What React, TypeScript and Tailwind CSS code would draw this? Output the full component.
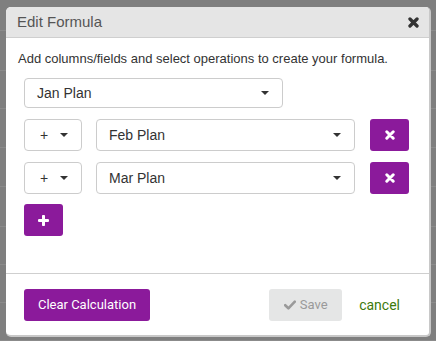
import React from "react";

function Caret() {
  return (
    <svg width="8" height="4" viewBox="0 0 8 4" className="flex-shrink-0">
      <path d="M0 0 H8 L4 4 Z" fill="#333" />
    </svg>
  );
}

function Times({ size = 10, color = "#fff", weight = 2.6 }: { size?: number; color?: string; weight?: number }) {
  return (
    <svg width={size} height={size} viewBox="0 0 10 10">
      <path d="M1.8 1.8 L8.2 8.2 M8.2 1.8 L1.8 8.2" stroke={color} strokeWidth={weight} strokeLinecap="round" />
    </svg>
  );
}

function Select({ label, className }: { label: string; className: string }) {
  return (
    <div
      className={
        "flex items-center justify-between border border-[#ccc] rounded-[4px] bg-white pl-[12px] pr-[13px] text-[14px] text-[#333] " +
        className
      }
    >
      <span>{label}</span>
      <Caret />
    </div>
  );
}

function FormulaRow({ label }: { label: string }) {
  return (
    <div className="flex items-center">
      <Select label="+" className="w-[58px] h-[32px] pl-[15px] pr-[11px]" />
      <Select label={label} className="w-[259px] h-[32px] ml-[14px]" />
      <button className="ml-[15px] w-[39px] h-[32px] rounded-[3px] bg-[#8b1a9b] flex items-center justify-center">
        <Times size={10} weight={3} />
      </button>
    </div>
  );
}

export default function App() {
  const bgRows = [31, 40, 38, 39, 39, 40, 38, 38, 38];

  return (
    <div className="relative w-[436px] h-[341px] bg-[#7f7f7f] overflow-hidden font-['Liberation_Sans',Arial,sans-serif]">
      {/* dimmed table behind the modal */}
      <div className="flex flex-col">
        {bgRows.map((h, idx) => (
          <div key={idx} className="border-b border-[#8b8b8b]" style={{ height: h }} />
        ))}
      </div>

      {/* Modal */}
      <div className="absolute left-[6px] top-[7px] w-[425px] h-[330px] bg-white rounded-[5px] border-r-[2px] border-b-[2px] border-[#c8c8c8] flex flex-col overflow-hidden">
        <div className="h-[31px] bg-[#e5e5e5] border-b border-[#cfcfcf] flex items-center justify-between pl-[11px] pr-[10px]">
          <span className="text-[15px] text-[#555]">Edit Formula</span>
          <Times size={11} color="#333" weight={3} />
        </div>

        <div className="px-[12px] pt-[13px] pb-[37px] border-b border-[#cfcfcf]">
          <p className="text-[13px] leading-[16px] text-[#333]">
            Add columns/fields and select operations to create your formula.
          </p>
          <div className="pl-[6px]">
            <Select label="Jan Plan" className="mt-[11px] w-[259px] h-[30px]" />
            <div className="mt-[11px]">
              <FormulaRow label="Feb Plan" />
            </div>
            <div className="mt-[11px]">
              <FormulaRow label="Mar Plan" />
            </div>
            <button className="mt-[10px] w-[39px] h-[32px] rounded-[3px] bg-[#8b1a9b] flex items-center justify-center">
              <svg width="11" height="11" viewBox="0 0 11 11">
                <path d="M5.5 1.2 V9.8 M1.2 5.5 H9.8" stroke="#fff" strokeWidth="3" strokeLinecap="round" />
              </svg>
            </button>
          </div>
        </div>

        <div className="flex items-center pl-[18px] pt-[15px] font-['Roboto',sans-serif]">
          <button className="w-[126px] h-[32px] rounded-[3px] bg-[#8b1a9b] text-white text-[13px]">
            Clear Calculation
          </button>
          <button className="ml-auto w-[73px] h-[32px] rounded-[3px] bg-[#e5e6e6] text-[#9a9a9a] text-[13px] flex items-center justify-center gap-[4px]">
            <svg width="12" height="10" viewBox="0 0 12 10">
              <path d="M1.2 5.2 L4.4 8.3 L10.8 1.6" stroke="#9a9a9a" strokeWidth="2.6" fill="none" strokeLinecap="round" strokeLinejoin="round" />
            </svg>
            Save
          </button>
          <span className="ml-[17px] mr-[29px] text-[14px] text-[#3d7a0b]">cancel</span>
        </div>
      </div>
    </div>
  );
}
